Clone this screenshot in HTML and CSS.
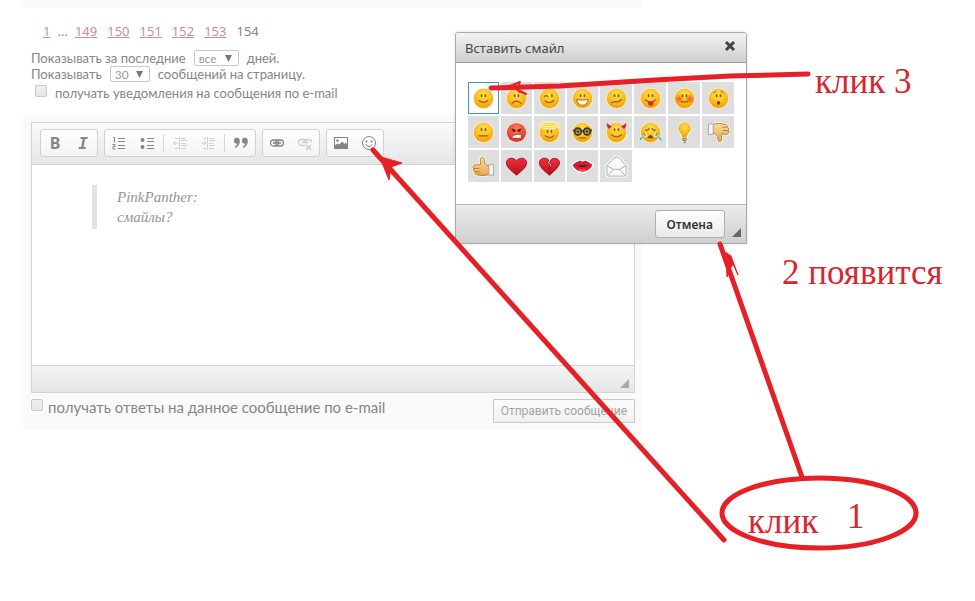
FILE: index.html
```html
<!DOCTYPE html>
<html lang="ru">
<head>
    <meta charset="UTF-8">
    <meta name="viewport" content="width=device-width, initial-scale=1.0">
    <title>Форум</title>
    <link rel="stylesheet" href="styles.css">
</head>
<body>
    <!-- shared shapes for the smileys -->
    <svg class="defs" width="0" height="0">
        <defs>
            <radialGradient id="yellow" cx="50%" cy="30%" r="70%">
                <stop offset="0" stop-color="#ffdf55"/>
                <stop offset="0.6" stop-color="#fdbf1c"/>
                <stop offset="1" stop-color="#f29a0c"/>
            </radialGradient>
            <radialGradient id="red" cx="50%" cy="30%" r="70%">
                <stop offset="0" stop-color="#ff7a62"/>
                <stop offset="1" stop-color="#d9321f"/>
            </radialGradient>
            <radialGradient id="cheek">
                <stop offset="0" stop-color="#f4541c"/>
                <stop offset="1" stop-color="#f4541c" stop-opacity="0"/>
            </radialGradient>
            <linearGradient id="heart" x1="0" y1="0" x2="0" y2="1">
                <stop offset="0" stop-color="#f0323c"/>
                <stop offset="1" stop-color="#b80d18"/>
            </linearGradient>
            <linearGradient id="skin" x1="0" y1="0" x2="0" y2="1">
                <stop offset="0" stop-color="#fbdc9c"/>
                <stop offset="1" stop-color="#e9a94f"/>
            </linearGradient>
            <symbol id="face" viewBox="0 0 24 24">
                <circle cx="12" cy="12" r="11" fill="#fff3c4"/>
                <circle cx="12" cy="12" r="9.8" fill="url(#yellow)" stroke="#f3a51c" stroke-width="0.6"/>
            </symbol>
            <symbol id="eyes" viewBox="0 0 24 24">
                <ellipse cx="10" cy="9" rx="1" ry="1.8" fill="#94600a"/>
                <ellipse cx="14" cy="9" rx="1" ry="1.8" fill="#94600a"/>
            </symbol>
        </defs>
    </svg>

    <div class="page">
        <div class="strip"></div>

        <nav class="pages">
            <a href="#">1</a>
            <span>...</span>
            <a href="#">149</a>
            <a href="#">150</a>
            <a href="#">151</a>
            <a href="#">152</a>
            <a href="#">153</a>
            <span>154</span>
        </nav>

        <form class="filter">
            <div class="filter-row">
                <label for="days">Показывать за последние</label>
                <select id="days" class="days"><option>все</option></select>
                <span>дней.</span>
            </div>
            <div class="filter-row">
                <label for="count">Показывать</label>
                <select id="count" class="count"><option>30</option></select>
                <span>сообщений на страницу.</span>
            </div>
            <div class="filter-row notify">
                <input type="checkbox" id="notify">
                <label for="notify">получать уведомления на сообщения по e-mail</label>
            </div>
        </form>

        <form class="reply">
            <div class="editor">
                <div class="toolbar">
                    <div class="group">
                        <button type="button" class="bold" title="Полужирный">B</button>
                        <button type="button" class="italic" title="Курсив">I</button>
                    </div>
                    <div class="group">
                        <button type="button" title="Нумерованный список">
                            <svg width="16" height="16" fill="none" stroke="#858585">
                                <path d="M7 3.5h7M7 6.5h7M7 10.5h7M7 13.5h7"/>
                                <path d="M2 2.5h1.5v5M1.500 9.5h2.5v2h-2v2.5h2.5"/>
                            </svg>
                        </button>
                        <button type="button" title="Маркированный список">
                            <svg width="16" height="16" fill="none" stroke="#858585">
                                <path d="M8 3.5h7M8 6.5h7M8 10.5h7M8 13.5h7"/>
                                <circle cx="3.5" cy="5" r="2" fill="#858585" stroke="none"/>
                                <circle cx="3.5" cy="12" r="2" fill="#858585" stroke="none"/>
                            </svg>
                        </button>
                        <i class="sep"></i>
                        <button type="button" title="Уменьшить отступ" disabled>
                            <svg width="16" height="16" fill="none" stroke="#cfcfcf">
                                <path d="M1.5 8h5M3.5 6l-2 2 2 2M7.5 2v13M9 3.5h5M9 5.5h6M9 8.5h4M9 10.5h6M9 13.5h5M3 3.5h3M3 13.5h3"/>
                            </svg>
                        </button>
                        <button type="button" title="Увеличить отступ" disabled>
                            <svg width="16" height="16" fill="none" stroke="#cfcfcf">
                                <path d="M1 8h5M4 6l2 2-2 2M7.5 2v13M9 3.5h5M9 5.5h6M9 8.5h4M9 10.5h6M9 13.5h5M3 3.5h3M3 13.5h3"/>
                            </svg>
                        </button>
                        <i class="sep"></i>
                        <button type="button" title="Цитата">
                            <svg width="16" height="16" fill="#858585">
                                <path d="M1 6a2.800 2.800 0 1 1 5.800-.5c.3 3.200-1.500 6.200-4.600 7.500l-.5-.9c1.500-.9 2.400-2.100 2.500-3.500C2.300 8.900 1 7.700 1 6z"/>
                                <path d="M9 6a2.800 2.800 0 1 1 5.800-.5c.3 3.200-1.500 6.200-4.600 7.500l-.5-.9c1.500-.9 2.400-2.100 2.500-3.500C10.300 8.900 9 7.700 9 6z"/>
                            </svg>
                        </button>
                    </div>
                    <div class="group">
                        <button type="button" title="Ссылка">
                            <svg width="16" height="16" fill="none" stroke="#858585" stroke-width="1.300">
                                <rect x="1.500" y="5" width="8" height="6" rx="3"/>
                                <rect x="6.500" y="5" width="8" height="6" rx="3"/>
                                <path d="M4 8h8" stroke-width="1.600"/>
                            </svg>
                        </button>
                        <button type="button" title="Убрать ссылку" disabled>
                            <svg width="16" height="16" fill="none" stroke="#cfcfcf" stroke-width="1.300">
                                <path d="M8 10.500H4.500a2.800 2.800 0 0 1 0-6H7a2.800 2.800 0 0 1 2 3M7 8a2.800 2.800 0 0 1 2-3.500h2.500a2.800 2.800 0 0 1 3 3M4.500 7.500h7"/>
                                <path d="M9 10l5 5M14 10l-5 5" stroke-width="1.700"/>
                            </svg>
                        </button>
                    </div>
                    <div class="group">
                        <button type="button" title="Изображение">
                            <svg width="16" height="16">
                                <rect x="1.500" y="2.500" width="13" height="11" fill="#fff" stroke="#858585"/>
                                <circle cx="4.500" cy="5.500" r="1.300" fill="#858585"/>
                                <path d="M2 13v-3l2.500-1.500L6 9.500l3.500-3 2 2.500 1-1.500L14 9v4z" fill="#858585"/>
                            </svg>
                        </button>
                        <button type="button" title="Вставить смайл">
                            <svg width="16" height="16" fill="none" stroke="#858585">
                                <circle cx="8" cy="8" r="6.500"/>
                                <circle cx="5.500" cy="6.500" r="1" fill="#858585" stroke="none"/>
                                <circle cx="10.500" cy="6.500" r="1" fill="#858585" stroke="none"/>
                                <path d="M4.500 9.500q3.500 4 7 0"/>
                            </svg>
                        </button>
                    </div>
                </div>
                <div class="content" contenteditable="true" spellcheck="false">
                    <blockquote>PinkPanther:<br>смайлы?</blockquote>
                </div>
                <div class="bottom"><i class="grip"></i></div>
            </div>
            <div class="reply-foot">
                <input type="checkbox" id="answers">
                <label for="answers">получать ответы на данное сообщение по e-mail</label>
                <button type="submit" class="send">Отправить сообщение</button>
            </div>
        </form>
    </div>

    <div class="dialog" role="dialog" aria-labelledby="dialog-title">
        <div class="dialog-head">
            <span id="dialog-title">Вставить смайл</span>
            <button type="button" class="close" aria-label="Закрыть">
                <svg width="12" height="12"><path d="M2 2l8 8M10 2l-8 8" stroke="#444" stroke-width="3"/></svg>
            </button>
        </div>
        <div class="smileys">
            <button type="button" class="active" title="улыбка">
                <svg viewBox="0 0 24 24"><use href="#face"/><use href="#eyes"/><path class="mouth" d="M7.500 14q4.500 4 9 0"/></svg>
            </button>
            <button type="button" title="грусть">
                <svg viewBox="0 0 24 24"><use href="#face"/><use href="#eyes"/><path class="mouth" d="M7.500 17q4.500-4.500 9 0"/></svg>
            </button>
            <button type="button" title="подмигивание">
                <svg viewBox="0 0 24 24"><use href="#face"/><path class="mouth" d="M6.500 10q2-2 4 0M7.500 14.500q5 4 9-.5"/><ellipse cx="14.500" cy="9" rx="1" ry="1.800" fill="#94600a"/></svg>
            </button>
            <button type="button" title="смех">
                <svg viewBox="0 0 24 24"><use href="#face"/><use href="#eyes"/><path d="M6 13q6 1.500 12 0q-1 6-6 6t-6-6z" fill="#fff" stroke="#a8650a"/></svg>
            </button>
            <button type="button" title="сомнение">
                <svg viewBox="0 0 24 24"><use href="#face"/><use href="#eyes"/><path class="mouth" d="M7 16.500q3-1.500 5-1t5-2.500"/></svg>
            </button>
            <button type="button" title="язык">
                <svg viewBox="0 0 24 24"><use href="#face"/><use href="#eyes"/><path d="M9.500 15.500h5.500v2.500q-2.700 3.500-5.500 0z" fill="#e3202b"/><path class="mouth" d="M6.500 13.500q5.500 4 11 0"/></svg>
            </button>
            <button type="button" title="смущение">
                <svg viewBox="0 0 24 24"><use href="#face"/><circle cx="6.500" cy="12.500" r="5" fill="url(#cheek)"/><circle cx="17.500" cy="12.500" r="5" fill="url(#cheek)"/><use href="#eyes"/><path class="mouth" d="M8.500 15.500h7"/></svg>
            </button>
            <button type="button" title="удивление">
                <svg viewBox="0 0 24 24"><use href="#face"/><use href="#eyes"/><path class="mouth thin" d="M7 6l2.500-1.500M14.500 4.500L17 6"/><ellipse cx="12" cy="16.500" rx="1.800" ry="2" fill="#7a4605"/></svg>
            </button>

            <button type="button" title="спокойствие">
                <svg viewBox="0 0 24 24"><use href="#face"/><use href="#eyes"/><path class="mouth" d="M7.500 15.500h9"/></svg>
            </button>
            <button type="button" title="злость">
                <svg viewBox="0 0 24 24"><circle cx="12" cy="12" r="11" fill="#ffe0d8"/><circle cx="12" cy="12" r="10" fill="url(#red)"/><path d="M7 8.500l4 1.500M17 8.500l-4 1.500M8 10.500h2.500M13.500 10.500H16" stroke="#601008" stroke-width="1.300"/><path d="M7 18q0-4.500 10-4v4z" fill="#fff" stroke="#8a1c10" stroke-width=".7"/></svg>
            </button>
            <button type="button" title="ангел">
                <svg viewBox="0 0 24 24"><use href="#face"/><ellipse cx="12" cy="4.500" rx="10" ry="2.500" fill="none" stroke="#fff" stroke-width="3"/><ellipse cx="12" cy="4.500" rx="10" ry="2.500" fill="none" stroke="#ffdc4c" stroke-width="1.500"/><use href="#eyes" y="2"/><path class="mouth" d="M7.500 15.500q4.500 3.500 9 0"/></svg>
            </button>
            <button type="button" title="очки">
                <svg viewBox="0 0 24 24"><use href="#face"/><circle cx="7.300" cy="11" r="3.500" fill="#a89a52" stroke="#35352d" stroke-width="1.700"/><circle cx="16.700" cy="11" r="3.500" fill="#a89a52" stroke="#35352d" stroke-width="1.700"/><path d="M10.500 10.500h3M2 9.500l2 1M22 9.500l-2 1" stroke="#35352d" stroke-width="1.500"/><circle cx="7.300" cy="11" r="1.300" fill="#4b4219"/><circle cx="16.700" cy="11" r="1.300" fill="#4b4219"/><path class="mouth" d="M9 17.500h6"/></svg>
            </button>
            <button type="button" title="чертик">
                <svg viewBox="0 0 24 24"><use href="#face"/><path d="M2 1q-1.500 5 2 8l4-4q-4 0-6-4zM22 1q1.500 5-2 8l-4-4q4 0 6-4z" fill="#d81e28" stroke="#fff" stroke-width=".5"/><use href="#eyes"/><path class="mouth" d="M7 14.500q5 4 10 0"/></svg>
            </button>
            <button type="button" title="плач">
                <svg viewBox="0 0 24 24"><use href="#face"/><path class="mouth" d="M7 9.500q2 1 3.500-1.500M17 9.500q-2 1-3.500-1.500"/><path d="M5 13.500q2 1 1 3M3 17.500l-2 2.500M19 13.500q-2 1-1 3M21 17.500l2 2.500" fill="none" stroke="#fff" stroke-width="3.500"/><path d="M4.500 13q2 1 1.500 3M3 17l-2 3M19.500 13q-2 1-1.500 3M21 17l2 3" fill="none" stroke="#3bb0dc" stroke-width="2"/><path d="M8.500 18q3.500-7 7 0z" fill="#7a4605"/></svg>
            </button>
            <button type="button" title="идея">
                <svg viewBox="0 0 24 24"><path d="M12 1a7 7 0 0 0-7 7c0 4 3.500 5 4 9v5h6v-5c.5-4 4-5 4-9a7 7 0 0 0-7-7z" fill="#fff8d8"/><path d="M12 2a6 6 0 0 0-6 6c0 3.500 3.500 4.500 4 8.500h4c.5-4 4-5 4-8.500a6 6 0 0 0-6-6z" fill="url(#yellow)" stroke="#e79b12" stroke-width=".7"/><path d="M9.500 18h5M9.500 20h5M11 22h2.500" stroke="#7c6a45" stroke-width="1.200"/></svg>
            </button>
            <button type="button" title="против">
                <svg viewBox="0 0 24 24"><path d="M6 3.500q8-2 13 0c2 0 2 2 2.500 3 1.500 1 1 2.500 1 3.500 1 1 .5 3-1 3.500q-1.500 1-6 0c-1 2 .5 5-.5 7s-4 1-3.500-1q.5-4-3.500-6.500H6z" fill="url(#skin)" stroke="#fff" stroke-width="2.500"/><path d="M6 3.500q8-2 13 0c2 0 2 2 2.500 3 1.500 1 1 2.500 1 3.500 1 1 .5 3-1 3.500q-1.500 1-6 0c-1 2 .5 5-.5 7s-4 1-3.500-1q.5-4-3.500-6.500H6z" fill="url(#skin)" stroke="#b77a2e"/><path d="M16 6.500h5M16.500 10h6" stroke="#b77a2e"/><path d="M1.500 3h5v11h-5z" fill="#f4f4f4" stroke="#a5a5a5"/></svg>
            </button>

            <button type="button" title="за">
                <svg viewBox="0 0 24 24"><path d="M18 20.500q-8 2-13 0c-2 0-2-2-2.500-3-1.500-1-1-2.500-1-3.500-1-1-.5-3 1-3.500q1.500-1 6 0c1-2-.5-5 .5-7s4-1 3.500 1q-.5 4 3.500 6.500H18z" fill="url(#skin)" stroke="#fff" stroke-width="2.500"/><path d="M18 20.500q-8 2-13 0c-2 0-2-2-2.500-3-1.500-1-1-2.500-1-3.500-1-1-.5-3 1-3.500q1.500-1 6 0c1-2-.5-5 .5-7s4-1 3.500 1q-.5 4 3.500 6.500H18z" fill="url(#skin)" stroke="#b77a2e"/><path d="M8 17.500H3M7.500 14h-6" stroke="#b77a2e"/><path d="M17.500 10h5v11h-5z" fill="#f4f4f4" stroke="#a5a5a5"/></svg>
            </button>
            <button type="button" title="сердце">
                <svg viewBox="0 0 24 24"><path d="M12 21C5 15.500 1.500 12 1.500 8S7 1 12 6c5-5 10.500-2 10.500 2S19 15.500 12 21z" fill="url(#heart)" stroke="#a50f18"/></svg>
            </button>
            <button type="button" title="разбитое сердце">
                <svg viewBox="0 0 24 24"><path d="M12 21C5 15.500 1.500 12 1.500 8S6.500 1.500 11 5l-1 3.500 2.500 2-1 5 3-5.500-2.500-2L14 4.500c4.500-2.500 8.500.5 8.500 3.500S19 15.500 12 21z" fill="url(#heart)" stroke="#a50f18"/></svg>
            </button>
            <button type="button" title="поцелуй">
                <svg viewBox="0 0 24 24"><path d="M1 10.500q5-4 8-4.500 2 0 3 1 1-1 3-1 3 .5 8 4.500-4 7.500-11 7.500T1 10.500z" fill="#d81e2c" stroke="#fff" stroke-width="2"/><path d="M1.500 10.500q5-4 7.500-4.500 2 0 3 1 1-1 3-1 2.500.5 7.500 4.500-4 7-10.500 7t-10.500-7z" fill="#d81e2c"/><path d="M4 11q5 .5 6-.5 2 1 4 0 1 1 6 .5-4 1.500-8 1.500t-8-1.500z" fill="#650710"/><path d="M8 15.500q4 1 8 0" stroke="#f3808a" fill="none"/></svg>
            </button>
            <button type="button" title="письмо">
                <svg viewBox="0 0 24 24"><path d="M2 11L9 3q3-2 6 0l7 8v9q0 2-2 2H4q-2 0-2-2z" fill="#fff" stroke="#fff" stroke-width="3"/><path d="M2 11L9 3q3-2 6 0l7 8v9q0 2-2 2H4q-2 0-2-2z" fill="#fafafa" stroke="#aaa"/><path d="M2.500 11.500L9 15h6l6.500-3.500M3 21.500L9 15M21 21.500L15 15" fill="none" stroke="#aaa"/></svg>
            </button>
        </div>
        <div class="dialog-foot">
            <button type="button" class="cancel">Отмена</button>
            <i class="grip"></i>
        </div>
    </div>

    <!-- hints drawn over the page -->
    <svg class="hints">
        <path d="M373 150L724 540M720 244L802 477"/>
        <path d="M491 88L560 86L655 80L730 76L808 74"/>
        <path class="head" d="M381 157L402 163L391 167L389 180L383 165z"/>
        <path class="head" d="M726 253L727 277L730 269L733 264L738 275L731 256z"/>
        <path class="thin" d="M526 94L510 86L520 82L519 84M514 86L520 92"/>
        <ellipse cx="819" cy="513" rx="97" ry="35"/>
        <text x="815" y="93">клик 3</text>
        <text x="782" y="284">2 появится</text>
        <text x="748" y="533">клик</text>
        <text x="847" y="528">1</text>
    </svg>
</body>
</html>
```

FILE: styles.css
```css
body {
    margin: 0;
    background: #fff;
    color: #858585;
    font-family: "Noto Sans", sans-serif;
    font-size: 13px;
}
button, select, input {
    font-family: inherit;
    margin: 0;
}
.defs {
    position: absolute;
}
.page {
    max-width: 619px;
    margin-left: 23px;
}
.strip {
    height: 8px;
    background: #fafafa;
}
.pages {
    display: flex;
    gap: 10px;
    padding: 13px 20px 0;
    line-height: 20px;
}
.pages a {
    color: #d58a90;
}
.pages a:first-child {
    margin-right: -3px;
}
.pages span:nth-child(2) {
    margin-right: -3px;
}

/* filter */
.filter {
    padding: 9px 8px 11px;
    font-family: "Lato", "Noto Sans", sans-serif;
    font-size: 13px;
}
.filter-row {
    display: flex;
    align-items: center;
    gap: 8px;
    height: 16px;
}
.filter-row.notify {
    height: 22px;
    padding-left: 4px;
}
select {
    appearance: none;
    height: 16px;
    padding: 0 4px;
    border: 1px solid #c8c8c8;
    border-radius: 2px;
    color: #999;
    font-size: 12px;
    line-height: 13px;
    background: #fff url("data:image/svg+xml,%3Csvg xmlns='http://www.w3.org/2000/svg' width='8' height='7'%3E%3Cpath d='M0 0h7L3.5 7z' fill='%23777'/%3E%3C/svg%3E") no-repeat right 5px center;
}
.days {
    width: 45px;
}
.count {
    width: 40px;
}
input[type=checkbox] {
    appearance: none;
    flex: none;
    width: 12px;
    height: 12px;
    border: 1px solid #c9c9c9;
    border-radius: 2px;
    background: linear-gradient(#f0f0f0, #e6e6e6);
}
.notify input {
    margin-bottom: 4px;
}

/* editor */
.reply {
    background: #fafafa;
    padding: 7px 7px 7px 8px;
}
.editor {
    border: 1px solid #d3d3d3;
    background: #fff;
}
.toolbar {
    display: flex;
    gap: 6px;
    padding: 6px 8px 7px;
    border-bottom: 1px solid #d3d3d3;
    background: linear-gradient(#fafafa, #e6e6e6);
}
.group {
    display: flex;
    align-items: center;
    border: 1px solid #d0d0d0;
    border-radius: 3px;
    background: linear-gradient(#fff, #f3f3f3);
}
.group button {
    display: flex;
    align-items: center;
    justify-content: center;
    width: 28px;
    height: 26px;
    padding: 0;
    border: 0;
    background: none;
    color: #858585;
}
.group .bold {
    font-size: 16px;
    font-weight: bold;
}
.group .italic {
    font: italic bold 16px "DejaVu Sans Mono", monospace;
}
.sep {
    width: 1px;
    height: 18px;
    margin: 0 2px;
    background: #d6d6d6;
}
.content {
    height: 180px;
    padding: 20px 60px 0;
    outline: none;
}
blockquote {
    margin: 0;
    padding: 2px 20px;
    border-left: 5px solid #e2e2e2;
    color: #949494;
    font: italic 15px/20px "Liberation Serif", serif;
}
.bottom {
    display: flex;
    justify-content: flex-end;
    align-items: flex-end;
    height: 26px;
    border-top: 1px solid #d3d3d3;
    background: linear-gradient(#f4f4f4, #e6e6e6);
}
.grip {
    width: 9px;
    height: 9px;
    margin: 0 5px 4px;
    background: #a8a8a8;
    clip-path: polygon(100% 0, 100% 100%, 0 100%);
}
.reply-foot {
    display: flex;
    align-items: flex-start;
    gap: 5px;
    padding-top: 6px;
    font-family: "Lato", "Noto Sans", sans-serif;
    font-size: 15px;
}
.reply-foot label {
    line-height: 16px;
}
.send {
    margin-left: auto;
    height: 24px;
    padding: 0 7px;
    border: 1px solid #c9c9c9;
    border-radius: 1px;
    background: linear-gradient(#fcfcfc, #f0f0f0);
    color: #a3a3a3;
    font: 12px "Roboto", sans-serif;
}

/* dialog */
.dialog {
    position: absolute;
    left: 455px;
    top: 32px;
    width: 290px;
    border: 1px solid #a9a9a9;
    border-radius: 3px 3px 0 0;
    background: #fff;
    box-shadow: 0 0 3px rgba(0, 0, 0, .15);
}
.dialog-head {
    display: flex;
    justify-content: space-between;
    align-items: center;
    height: 29px;
    padding: 0 10px 0 9px;
    border-bottom: 1px solid #999;
    border-radius: 2px 2px 0 0;
    background: linear-gradient(#f3f3f3, #cfcfcf);
    color: #474747;
    font-size: 13px;
}
.close {
    display: flex;
    padding: 0 0 4px;
    border: 0;
    background: none;
}
.smileys {
    display: grid;
    grid-template-columns: repeat(4, 31px) repeat(4, 32px);
    grid-auto-rows: 32px;
    gap: 2px;
    padding: 19px 12px 22px;
}
.smileys button {
    display: flex;
    align-items: center;
    justify-content: center;
    padding: 0;
    border: 1px solid #dedede;
    background: #dedede;
}
.smileys button.active {
    border-color: #3c96cb;
    background: #fff;
}
.smileys svg {
    width: 23px;
    height: 23px;
}
.mouth {
    fill: none;
    stroke: #94600a;
    stroke-width: 1.3;
    stroke-linecap: round;
}
.mouth.thin {
    stroke-width: 1;
}
.dialog-foot {
    display: flex;
    justify-content: flex-end;
    align-items: center;
    height: 38px;
    border-top: 1px solid #b5b5b5;
    background: linear-gradient(#ebebeb, #cfcfcf);
}
.cancel {
    height: 28px;
    padding: 0 11px;
    border: 1px solid #b0b0b0;
    border-radius: 3px;
    background: linear-gradient(#fff, #e9e9e9);
    color: #333;
    font-size: 12px;
    font-weight: 600;
}
.dialog-foot .grip {
    align-self: flex-end;
    margin: 0 5px 6px 7px;
    background: #666;
}

.hints {
    position: absolute;
    left: 0;
    top: 0;
    width: 100%;
    height: 100%;
    overflow: visible;
    pointer-events: none;
    fill: none;
    stroke: #e71f27;
    stroke-width: 5;
    stroke-linecap: round;
    stroke-linejoin: round;
}
.hints .head {
    fill: #e71f27;
    stroke-width: 1;
}
.hints .thin {
    stroke-width: 2;
}
.hints text {
    fill: #d8262f;
    stroke: none;
    font-family: "Liberation Serif", serif;
    font-size: 35px;
}
```
